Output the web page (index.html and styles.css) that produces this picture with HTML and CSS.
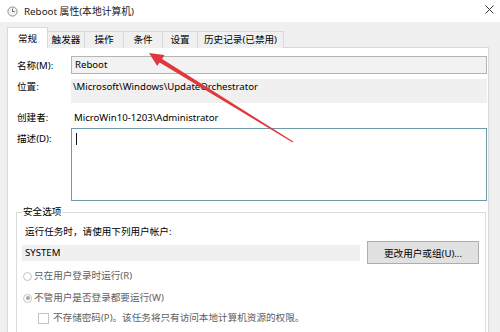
FILE: index.html
```html
<!DOCTYPE html>
<html lang="zh-CN">
<head>
    <meta charset="UTF-8">
    <title>Reboot 属性(本地计算机)</title>
    <link rel="stylesheet" href="styles.css">
</head>
<body>
    <div class="window">
        <div class="titlebar">
            <svg class="title-icon" width="11" height="11" viewBox="0 0 11 11">
                <circle cx="5.5" cy="5.5" r="4.6" fill="#f4f4f4" stroke="#8a8a8a" stroke-width="1"/>
                <path d="M5.5 2.6 V5.6 H7.8" fill="none" stroke="#6a6a6a" stroke-width="1"/>
            </svg>
            <span class="title-text">Reboot 属性(本地计算机)</span>
            <span class="close-btn">
                <svg width="9" height="9" viewBox="0 0 9 9">
                    <path d="M0.5 0.5 L8.5 8.5 M8.5 0.5 L0.5 8.5" stroke="#333" stroke-width="1"/>
                </svg>
            </span>
        </div>

        <div class="dialog">
            <div class="tabs">
                <div class="tab active">常规</div>
                <div class="tab">触发器</div>
                <div class="tab">操作</div>
                <div class="tab">条件</div>
                <div class="tab">设置</div>
                <div class="tab">历史记录(已禁用)</div>
            </div>

            <div class="panel">
                <div class="field-row">
                    <label class="field-label">名称(M):</label>
                    <div class="name-box">Reboot</div>
                </div>
                <div class="field-row loc-row">
                    <label class="field-label">位置:</label>
                    <div class="loc-box">\Microsoft\Windows\UpdateOrchestrator</div>
                </div>
                <div class="field-row author-row">
                    <label class="field-label">创建者:</label>
                    <div class="author-text">MicroWin10-1203\Administrator</div>
                </div>
                <div class="field-row desc-row">
                    <label class="field-label">描述(D):</label>
                    <div class="desc-box"><span class="caret"></span></div>
                </div>

                <fieldset class="security">
                    <legend>安全选项</legend>
                    <div class="run-as-label">运行任务时，请使用下列用户帐户:</div>
                    <div class="user-row">
                        <div class="user-box">SYSTEM</div>
                        <button class="change-btn">更改用户或组(U)...</button>
                    </div>
                    <div class="option-row first">
                        <span class="radio"></span>
                        <span>只在用户登录时运行(R)</span>
                    </div>
                    <div class="option-row">
                        <span class="radio checked"></span>
                        <span>不管用户是否登录都要运行(W)</span>
                    </div>
                    <div class="option-row check-row">
                        <span class="checkbox"></span>
                        <span>不存储密码(P)。该任务将只有访问本地计算机资源的权限。</span>
                    </div>
                </fieldset>
            </div>
        </div>

        <!-- 红色标注箭头 -->
        <svg class="arrow" width="500" height="332" viewBox="0 0 500 332">
            <polygon points="149,53 164.5,55 162.1,58.9 293.3,141.6 292.7,142.4 159.6,62.5 157.3,66" fill="#e0383c"/>
        </svg>
    </div>
</body>
</html>
```

FILE: styles.css
```css
body {
    margin: 0;
    background: #f0f0f0;
    font-family: "Noto Sans", "Noto Sans CJK SC", sans-serif;
    font-size: 9.6px;
    color: #000;
}

.window {
    position: relative;
    width: 500px;
    height: 332px;
    overflow: hidden;
    background: #f0f0f0;
}

/* 标题栏 */
.titlebar {
    height: 22px;
    background: #fff;
    display: flex;
    align-items: center;
    padding-left: 7px;
}

.title-icon {
    margin-right: 6px;
}

.title-text {
    font-size: 9.8px;
    color: #222;
}

.close-btn {
    margin-left: auto;
    margin-right: 6px;
    margin-top: -3px;
    display: flex;
}

/* 选项卡 */
.dialog {
    padding: 6px 11px 0 7px;
}

.tabs {
    display: flex;
    align-items: flex-end;
    height: 20px;
    position: relative;
    z-index: 1;
}

.tab {
    box-sizing: border-box;
    height: 17px;
    line-height: 16px;
    padding: 0;
    white-space: nowrap;
    background: #f0f0f0;
    border: 1px solid #d9d9d9;
    border-bottom: none;
    margin-left: -1px;
    text-align: center;
}

.tab:nth-child(1) { width: 41px; margin-left: 0; }
.tab:nth-child(2) { width: 38px; }
.tab:nth-child(3) { width: 40px; }
.tab:nth-child(4) { width: 40px; }
.tab:nth-child(5) { width: 36px; }
.tab:nth-child(6) { width: 87px; }

.tab.active {
    background: #fff;
    height: 21px;
    line-height: 22px;
}

.panel {
    background: #fff;
    border: 1px solid #d9d9d9;
    margin-top: -1px;
    padding: 8px 1px 0 8px;
    height: 300px;
}

/* 常规字段 */
.field-row {
    display: flex;
    align-items: center;
}

.field-label {
    width: 54px;
    padding-left: 1px;
    flex-shrink: 0;
}

.name-box {
    flex: 1;
    height: 16px;
    line-height: 16px;
    padding-left: 3px;
    background: #f2f2f2;
    border: 1px solid #b5b5b5;
}

.loc-row {
    margin-top: 5px;
    align-items: flex-start;
}

.loc-row .field-label {
    line-height: 16px;
}

.loc-box {
    flex: 1;
    height: 24px;
    line-height: 16px;
    padding-left: 2px;
    background: #f0f0f0;
}

.author-row {
    margin-top: 5px;
    height: 18px;
}

.author-text {
    padding-left: 3px;
}

.desc-row {
    margin-top: 2px;
    align-items: flex-start;
}

.desc-row .field-label {
    line-height: 16px;
    padding-top: 3px;
}

.desc-box {
    flex: 1;
    height: 73px;
    border: 1px solid #6f9ba8;
    padding: 4px 0 0 4px;
    box-sizing: border-box;
}

.caret {
    display: block;
    width: 1px;
    height: 12px;
    background: #111;
}

/* 安全选项 */
.security {
    margin: 3px 1px 0 0;
    border: 1px solid #dcdcdc;
    padding: 0 0 10px 5px;
}

.security legend {
    padding: 0 1px;
    margin-left: 0;
    line-height: 16px;
}

.run-as-label {
    margin-top: 4px;
    padding-left: 3px;
    line-height: 16px;
}

.user-row {
    display: flex;
    align-items: center;
    margin-top: 1px;
    gap: 7px;
}

.user-box {
    width: 335px;
    height: 16px;
    line-height: 16px;
    padding-left: 3px;
    background: #f0f0f0;
}

.change-btn {
    width: 112px;
    height: 23px;
    padding: 0;
    background: #e1e1e1;
    border: 1px solid #adadad;
    font-family: inherit;
    font-size: 9.6px;
    color: #000;
}

.option-row {
    display: flex;
    align-items: center;
    line-height: 16px;
    margin-top: 6px;
    color: #5e5e5e;
}

.option-row.first {
    margin-top: 4px;
}

.option-row.check-row {
    margin-top: 4px;
    padding-left: 16px;
}

.radio {
    width: 7px;
    height: 7px;
    border: 1px solid #c4c4c4;
    border-radius: 50%;
    margin: 0 2px 0 1px;
    position: relative;
}

.radio.checked::after {
    content: "";
    position: absolute;
    left: 1.5px;
    top: 1.5px;
    width: 4px;
    height: 4px;
    border-radius: 50%;
    background: #a8a8a8;
}

.checkbox {
    width: 9px;
    height: 9px;
    border: 1px solid #c4c4c4;
    margin-right: 4px;
}

.arrow {
    position: absolute;
    left: 0;
    top: 0;
    pointer-events: none;
}
```
